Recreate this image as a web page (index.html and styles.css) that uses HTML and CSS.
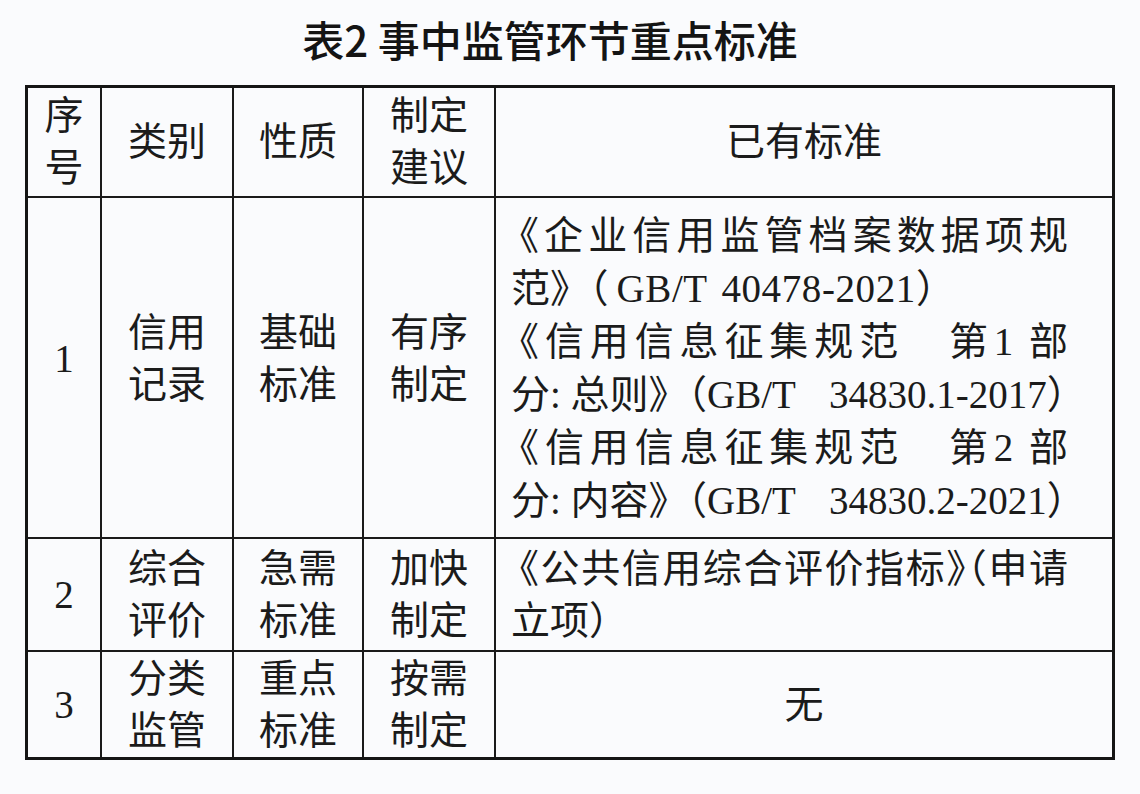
FILE: index.html
```html
<!DOCTYPE html>
<html lang="zh-CN">
<head>
<meta charset="utf-8">
<title>表2 事中监管环节重点标准</title>
<link rel="stylesheet" href="styles.css">
</head>
<body>
<div class="page">
  <h1 class="title">表2 事中监管环节重点标准</h1>
  <table class="std-table">
    <colgroup>
      <col class="c1"><col class="c2"><col class="c3"><col class="c4"><col class="c5">
    </colgroup>
    <tr class="r-head">
      <td class="cell">序<br>号</td>
      <td class="cell">类别</td>
      <td class="cell">性质</td>
      <td class="cell">制定<br>建议</td>
      <td class="cell last">已有标准</td>
    </tr>
    <tr class="r-1">
      <td class="cell num lift">1</td>
      <td class="cell lift">信用<br>记录</td>
      <td class="cell lift">基础<br>标准</td>
      <td class="cell lift">有序<br>制定</td>
      <td class="cell last doc tall">
        <div class="ln just"><span class="lead">《</span>企业信用监管档案数据项规</div>
        <div class="ln">范》（<span class="wide">GB/T 40478-2021</span>）</div>
        <div class="ln just"><span class="lead">《</span>信用信息征集规范　第1 部</div>
        <div class="ln">分: 总则》（GB/T<span class="gap"></span>34830.1-2017<span class="h">）</span></div>
        <div class="ln just"><span class="lead">《</span>信用信息征集规范　第2 部</div>
        <div class="ln">分: 内容》（GB/T<span class="gap"></span>34830.2-2021<span class="h">）</span></div>
      </td>
    </tr>
    <tr class="r-2">
      <td class="cell num">2</td>
      <td class="cell">综合<br>评价</td>
      <td class="cell">急需<br>标准</td>
      <td class="cell">加快<br>制定</td>
      <td class="cell last doc">
        <div class="ln just"><span class="lead">《</span>公共信用综合评价指标<span class="h">》</span><span class="h">（</span>申请</div>
        <div class="ln">立项）</div>
      </td>
    </tr>
    <tr class="r-3">
      <td class="cell num bottom">3</td>
      <td class="cell bottom">分类<br>监管</td>
      <td class="cell bottom">重点<br>标准</td>
      <td class="cell bottom">按需<br>制定</td>
      <td class="cell last bottom">无</td>
    </tr>
  </table>
</div>
</body>
</html>
```

FILE: styles.css
```css
html, body {
  margin: 0;
  padding: 0;
  background: #fafbfd;
}

.page {
  width: 1140px;
  height: 794px;
  padding-top: 14px;
  box-sizing: border-box;
}

.title {
  margin: 0;
  padding-right: 40px;
  height: 50px;
  line-height: 50px;
  text-align: center;
  font-family: "Noto Sans CJK SC", "Noto Sans", sans-serif;
  font-size: 42px;
  font-weight: 500;
  color: #141414;
}

.std-table {
  margin: 21px 0 0 25px;
  width: 1090px;
  table-layout: fixed;
  border-collapse: separate;
  border-spacing: 0;
  border: 3px solid #151515;
  font-family: "Liberation Serif", "Noto Sans CJK SC", serif;
  font-size: 39px;
  line-height: 52px;
  color: #1b1b1b;
}

.c1 { width: 74px; }
.c2 { width: 132px; }
.c3 { width: 130px; }
.c4 { width: 132px; }
.c5 { width: 616px; }

.r-head { height: 110px; }
.r-1 { height: 341px; }
.r-2 { height: 113px; }
.r-3 { height: 105px; }

.cell {
  box-sizing: border-box;
  padding: 0;
  text-align: center;
  vertical-align: middle;
  border-right: 2px solid #1a1a1a;
  border-bottom: 2px solid #1a1a1a;
}

.cell.last { border-right: none; }
.cell.bottom { border-bottom: none; }

.cell.lift { padding-bottom: 18px; }

.doc {
  text-align: left;
  padding: 0 44px 0 15px;
}

.doc.tall { line-height: 53px; }

.ln {
  white-space: nowrap;
}

.ln.just {
  text-align: justify;
  text-align-last: justify;
  text-justify: inter-character;
}

.lead {
  margin-left: -11px;
}

.h {
  font-feature-settings: "halt";
}

.gap {
  display: inline-block;
  width: 33px;
}

.wide {
  margin-left: 8px;
  word-spacing: 4px;
  letter-spacing: 0.6px;
}
```
